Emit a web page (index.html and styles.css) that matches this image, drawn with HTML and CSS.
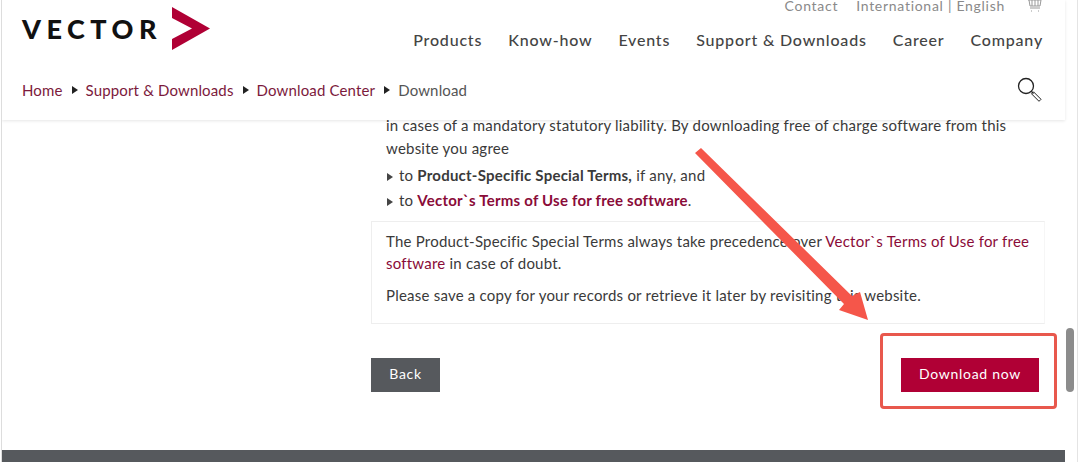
FILE: index.html
```html
<!DOCTYPE html>
<html>
<head lang="en">
    <meta charset="UTF-8">
    <title>Download</title>
    <link rel="stylesheet" href="styles.css">
</head>
<body>
<div class="page">
    <div class="main">
        <div class="text">
            <p class="para">in cases of a mandatory statutory liability. By downloading free of charge software from this website you agree</p>
            <p class="item item-first"><i class="tri tri-grey"></i>to <b>Product-Specific Special Terms,</b> if any, and</p>
            <p class="item"><i class="tri tri-grey"></i>to <a class="strong-link">Vector`s Terms of Use for free software</a>.</p>
        </div>
        <div class="note">
            <p>The Product-Specific Special Terms always take precedence over <a>Vector`s Terms of Use for free software</a> in case of doubt.</p>
            <p>Please save a copy for your records or retrieve it later by revisiting this website.</p>
        </div>
        <div class="buttons">
            <button class="btn btn-back">Back</button>
            <button class="btn btn-download">Download now</button>
        </div>
    </div>
    <div class="header">
        <div class="header-top">
            <div class="logo">
                <span class="logo-text">VECTOR</span>
                <svg class="logo-mark" width="38" height="43" viewBox="0 0 38 43">
                    <polygon points="0,0 38,21.5 0,43 0,32 20,21.5 0,11" fill="#b00035"/>
                </svg>
            </div>
            <div class="nav-box">
                <div class="meta-nav">
                    <span>Contact</span>
                    <span>International | English</span>
                    <svg class="cart" width="16" height="12" viewBox="0 0 16 12" fill="none" stroke="#999" stroke-width="1">
                        <path d="M1 0h13l-1 6H3L2 0M5 0v6M8 0v6M11 0v6M3 8h10M4 11h1M11 11h1"/>
                    </svg>
                </div>
                <ul class="main-nav">
                    <li>Products</li>
                    <li>Know-how</li>
                    <li>Events</li>
                    <li>Support &amp; Downloads</li>
                    <li>Career</li>
                    <li>Company</li>
                </ul>
            </div>
        </div>
        <div class="crumbs">
            <a>Home</a><i class="tri"></i>
            <a>Support &amp; Downloads</a><i class="tri"></i>
            <a>Download Center</a><i class="tri"></i>
            <span>Download</span>
            <svg class="search" width="28" height="28" viewBox="0 0 28 28" fill="none" stroke="#222">
                <circle cx="10" cy="10" r="7.5" stroke-width="1.3"/>
                <path d="M15.5 15.5l2 2" stroke-width="1.3"/>
                <path d="M17.5 15.8l7.5 7.5-2 2-7.5-7.5z" stroke-width="1"/>
            </svg>
        </div>
    </div>
    <div class="footer"></div>
    <div class="scrollbar"></div>
</div>

<div class="mark-box"></div>
<svg class="mark-arrow" width="1080" height="462" viewBox="0 0 1080 462">
    <polygon points="701,148 695,153 844,304 839,310 868,320 860,292 852,296" fill="#f5564a"/>
</svg>
</body>
</html>
```

FILE: styles.css
```css
* {
    margin: 0;
    padding: 0;
    list-style: none;
    box-sizing: border-box;
}

html, body {
    height: 462px;
    overflow: hidden;
    background: #fff;
}

body {
    font-family: "Lato", "Open Sans", sans-serif;
    font-size: 15px;
    color: #333;
}

.page {
    height: 462px;
    margin: 0 2px 0 1px;
    border-left: 1px solid #ddd;
    border-right: 1px solid #e4e4e4;
    overflow: hidden;
    position: relative;
}

.header {
    position: absolute;
    left: 0;
    top: 0;
    right: 12px;
    height: 120px;
    padding: 0 22px 0 20px;
    background: #fff;
    box-shadow: 0 1px 3px rgba(0, 0, 0, 0.1);
}

.header-top {
    display: flex;
    justify-content: space-between;
    height: 76px;
}

.logo {
    display: flex;
    align-items: center;
    height: 56px;
}

.logo-text {
    font-weight: 900;
    font-size: 27px;
    letter-spacing: 5.5px;
    color: #111;
    margin-right: 10px;
}

.nav-box {
    display: flex;
    flex-direction: column;
    align-items: flex-end;
}

.meta-nav {
    height: 12px;
    display: flex;
    align-items: center;
    gap: 18px;
    font-size: 14px;
    line-height: 12px;
    letter-spacing: 0.72px;
    color: #8a8a8a;
}

.cart {
    margin-left: 4px;
}

.main-nav {
    display: flex;
    gap: 26px;
    margin-top: 18px;
    font-size: 16px;
    font-weight: 500;
    letter-spacing: 0.8px;
    color: #444;
}

.crumbs {
    display: flex;
    align-items: center;
    height: 26px;
    margin-top: 1px;
    font-size: 15px;
    letter-spacing: 0.15px;
    color: #555;
}

.crumbs a {
    color: #7c1a3c;
}

.tri {
    display: inline-block;
    width: 0;
    height: 0;
    border-left: 6px solid #222;
    border-top: 4px solid transparent;
    border-bottom: 4px solid transparent;
    margin: 0 8px 0 9px;
}

.search {
    margin: 0 -1px 0 auto;
}

.main {
    height: 462px;
    padding: 114px 32px 0 369px;
    line-height: 23px;
    letter-spacing: 0.22px;
    color: #3a3a3a;
}

.text {
    padding-left: 15px;
}

.item {
    margin-top: 2px;
}

.item-first {
    margin-top: 4px;
}

.item b,
.strong-link {
    font-weight: 700;
}

.strong-link {
    color: #8a0b38;
}

.tri-grey {
    border-left-color: #444;
    margin: 0 6px 0 1px;
}

.note {
    height: 103px;
    margin-top: 9px;
    padding: 8px 10px 0 14px;
    border: 1px solid #eee;
    border-right-color: #f6f6f6;
    line-height: 22px;
}

.note p {
    margin-bottom: 10px;
}

.note a {
    color: #8a0b38;
}

.buttons {
    display: flex;
    justify-content: space-between;
    margin-top: 34px;
    padding-right: 6px;
}

.btn {
    height: 34px;
    padding-bottom: 3px;
    border: none;
    color: #fff;
    font-family: "Lato", sans-serif;
    font-size: 14px;
    letter-spacing: 0.7px;
}

.btn-back {
    width: 69px;
    background: #56595d;
}

.btn-download {
    width: 138px;
    background: #b00035;
}

.footer {
    position: absolute;
    left: 0;
    right: 12px;
    bottom: 0;
    height: 12px;
    background: #56595d;
}

.scrollbar {
    position: absolute;
    left: 1064px;
    top: 328px;
    width: 8px;
    height: 64px;
    border-radius: 4px;
    background: #8c8c8c;
}

.mark-box {
    position: absolute;
    left: 880px;
    top: 333px;
    width: 177px;
    height: 76px;
    border: 3px solid #e8584d;
    border-radius: 4px;
}

.mark-arrow {
    position: absolute;
    left: 0;
    top: 0;
}
```
